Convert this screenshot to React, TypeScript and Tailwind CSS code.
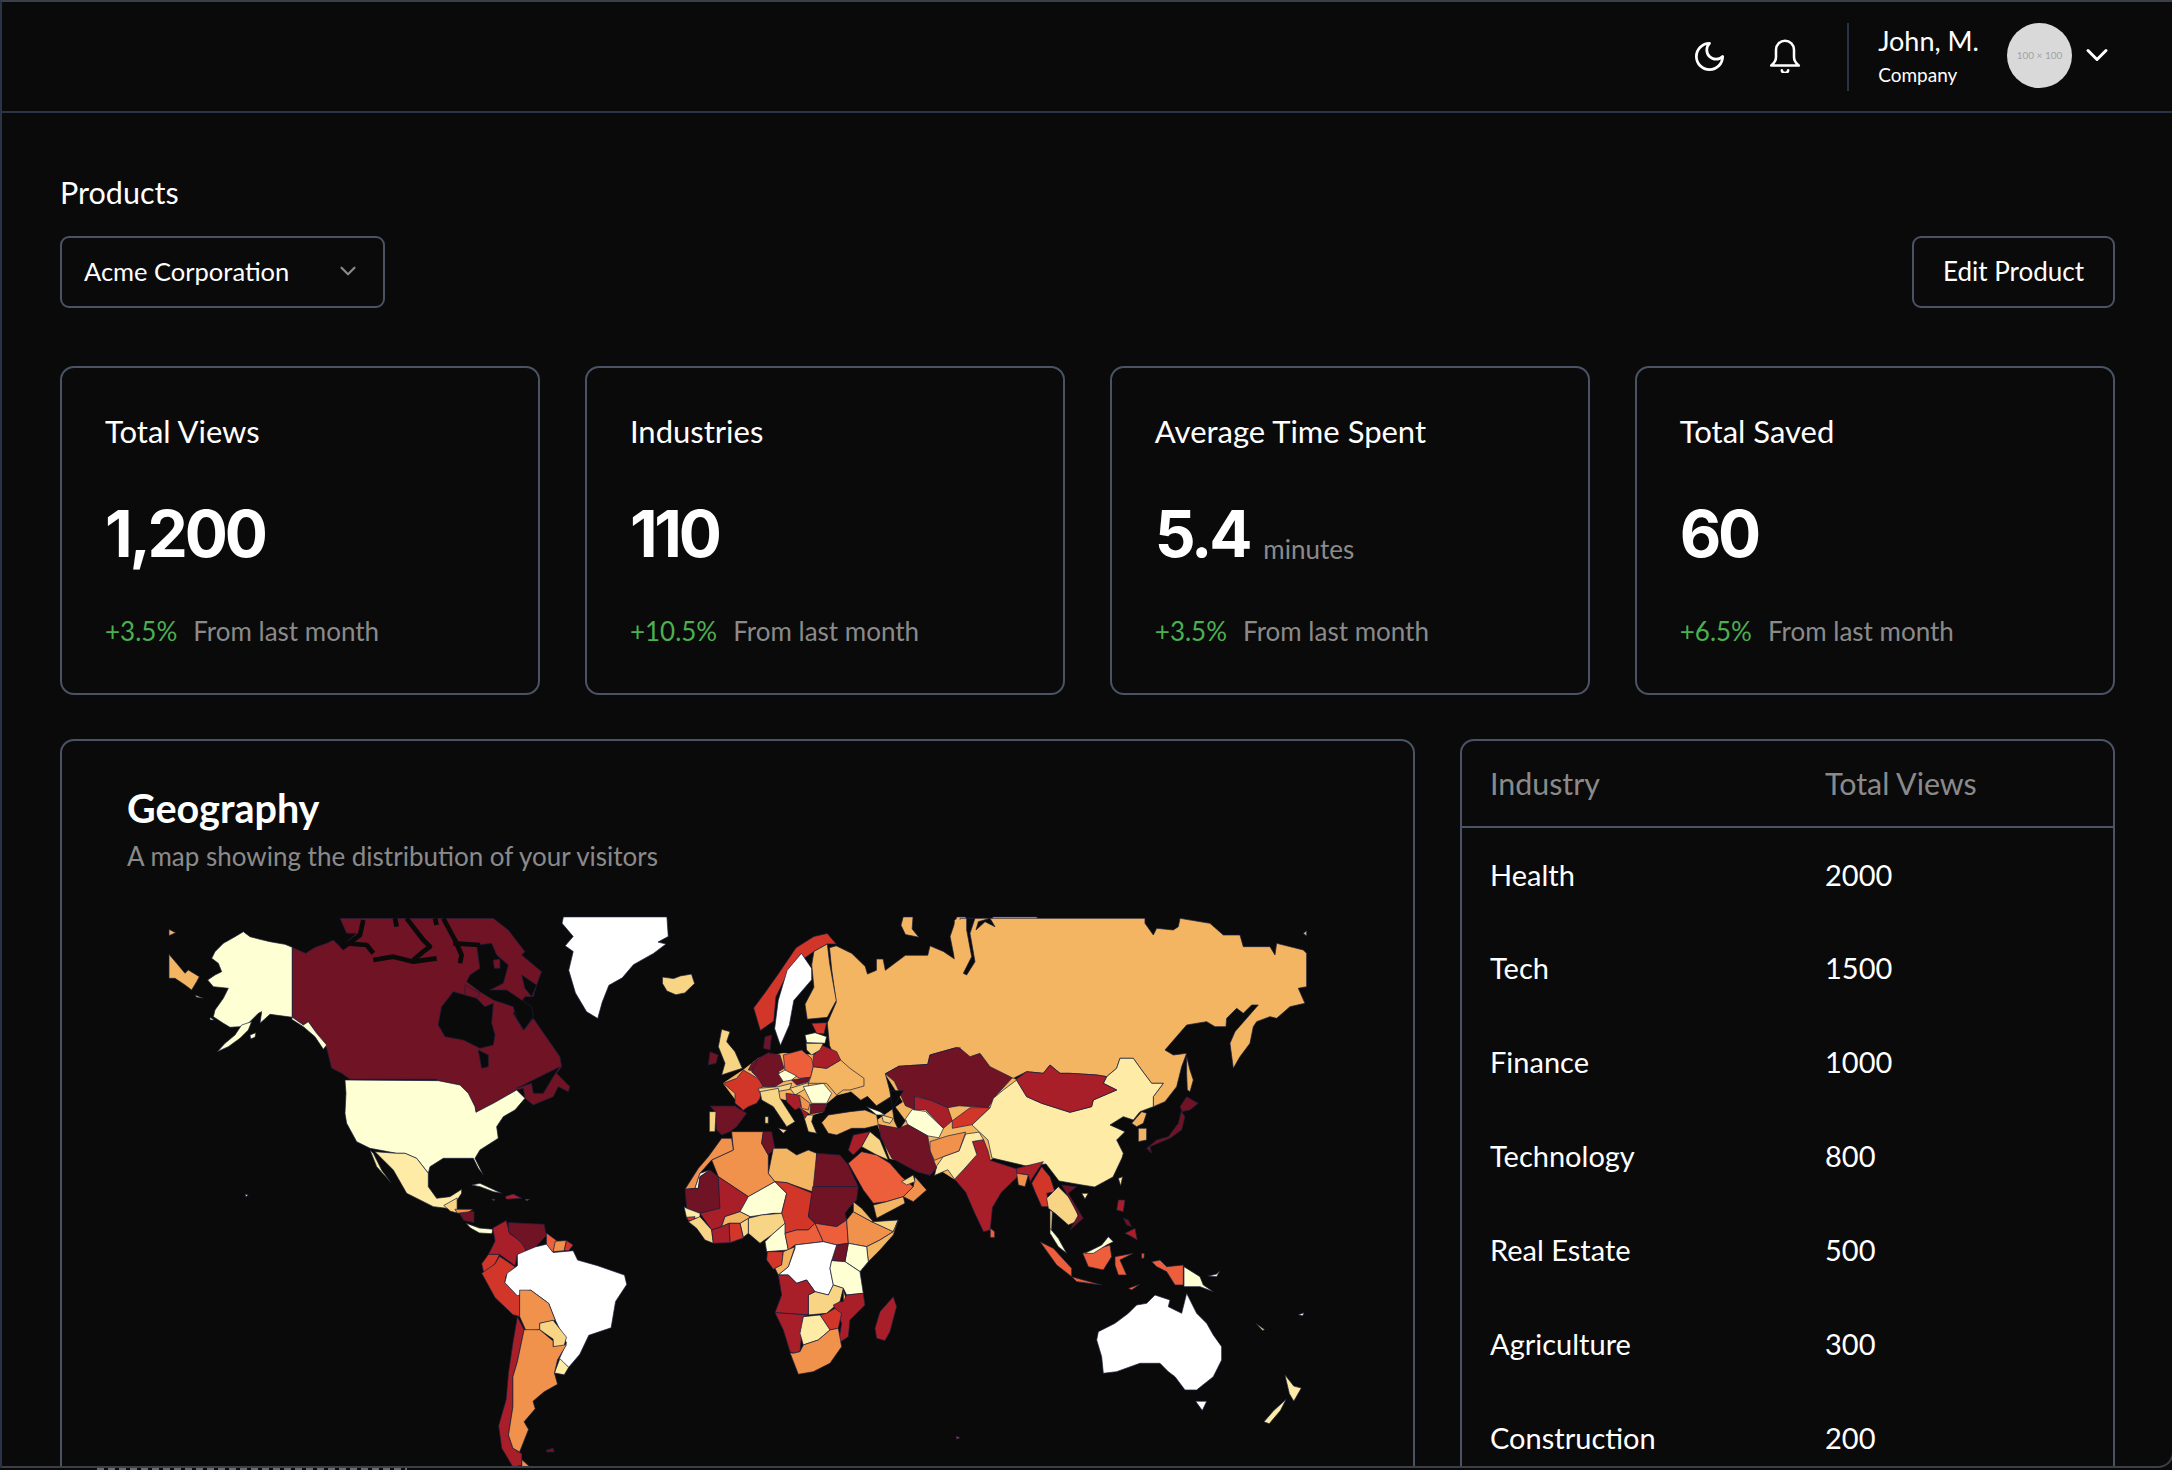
import React from 'react';
import { ChevronDown } from 'lucide-react';

const C = {
  maroon: '#6f1325',
  red: '#a81f2a',
  scarlet: '#d23629',
  coral: '#ec5f3a',
  orange: '#f0914c',
  amber: '#f3b562',
  sand: '#f8d585',
  cream: '#fdeba6',
  ivory: '#ffffd4',
  white: '#ffffff',
  sea: '#0a0a0a',
};

// fill, points, optional stroke (for patches that should not show an edge)
type Shape = [string, string, string?];

// canada, usa, mexico, caribbean at 1/3
const northAmerica: Shape[] = [
  [C.amber, '27,133 50,160 75,190 85,180 118,200 110,215 95,240 75,225 45,205 27,205'],
  [C.amber, '27,58 47,68 27,77'],
  [C.ivory, '105,255 130,265 110,262'],
  [C.ivory, '150,322 163,330 150,330'],
  [C.ivory, '397,112 375,103 330,95 300,88 270,80 250,65 225,80 190,100 165,125 155,145 175,160 185,185 165,195 143,210 160,230 205,235 190,265 165,300 160,320 190,340 210,352 240,350 260,345 275,330 295,310 305,305 300,340 330,313 397,322'],
  [C.ivory, '275,335 265,360 240,385 205,410 172,425 195,400 225,375 245,345'],
  [C.ivory, '270,375 288,368 285,382 272,387'],
  [C.maroon, '397,112 437,130 465,112 500,100 520,90 545,115 560,95 590,70 560,70 540,25 1000,25 1045,60 1095,125 1085,135 1145,185 1130,225 1120,260 1095,260 1060,310 1090,360 1120,325 1200,440 1205,470 1190,490 1230,530 1225,545 1195,530 1180,560 1120,585 1095,565 1090,535 1070,540 1000,580 950,607 945,590 925,550 900,525 835,512 830,508 570,508 545,490 515,475 500,415 470,370 445,335 430,345 397,322'],
  [C.ivory, '397,322 430,345 445,335 470,370 500,405 490,418 465,380 430,350 395,328'],
  [C.sea, '880,245 915,255 945,260 975,290 1000,280 995,340 1005,375 1000,405 960,415 910,390 855,380 835,345 845,290'],
  [C.sea, '955,420 985,435 985,470 965,475'],
  [C.sea, '950,105 995,100 1010,135 1045,165 1030,220 990,240 1040,240 1115,290 1120,320 1092,360 1070,325 1060,290 1000,270 960,245 920,215 930,195 960,175'],
  [C.maroon, '1000,150 1020,148 1020,175 1003,175'],
  [C.maroon, '915,225 960,250 950,265 915,255'],
  [C.sea, '1085,195 1130,225 1115,260 1095,235'],
  [C.sea, '1200,470 1130,505 1070,535 1115,520 1120,550 1150,550 1180,500'],
  [C.ivory, '555,510 835,512 900,525 925,550 945,590 948,607 980,590 1000,580 1070,540 1095,565 1065,600 1030,620 1010,650 1015,685 960,720 945,745 970,795 955,775 940,745 885,745 850,745 810,770 805,790 770,745 735,730 710,730 630,715 590,695 560,640 555,610 558,550'],
  [C.cream, '645,725 710,730 735,730 770,745 805,790 805,830 830,865 870,860 905,838 905,850 885,880 860,895 820,890 740,850 700,780 660,740'],
  [C.cream, '630,720 650,770 693,818 665,780 640,730'],
  [C.ivory, '935,825 960,820 1025,850 1000,845 960,830'],
  [C.red, '1035,860 1060,852 1085,865 1040,868'],
  [C.orange, '995,868 1005,868 1002,872'],
  [C.orange, '1095,868 1110,868 1100,872'],
  [C.white, '255,853 265,855 258,860'],
];

// greenland, central + south america, traced at 0.4464 x 0.3763
const southAmerica: Shape[] = [
  [C.white, '1038,98 1270,98 1273,150 1250,165 1268,170 1240,195 1195,225 1170,260 1140,280 1125,325 1115,368 1090,350 1065,300 1050,240 1060,190 1042,175 1060,150 1035,115'],
  [C.sand, '1260,258 1285,262 1300,255 1325,250 1332,275 1310,300 1290,305 1270,295 1260,275'],
  [C.sand, '770,865 800,845 800,885 785,880'],
  [C.orange, '795,875 835,875 820,888 800,885'],
  [C.maroon, '805,885 838,880 838,910 815,905'],
  [C.ivory, '820,912 850,925 880,928 878,940 850,938 830,925'],
  [C.red, '910,905 918,940 950,965 955,990 935,995 930,1025 895,995 870,995 885,960 880,925'],
  [C.maroon, '915,910 995,915 1000,945 960,995 945,965 915,935'],
  [C.coral, '1000,938 1025,960 1015,990 1000,970'],
  [C.orange, '1020,960 1045,958 1040,985 1015,988'],
  [C.scarlet, '1045,958 1060,970 1050,985 1040,985'],
  [C.scarlet, '870,995 895,995 885,1020 860,1045 855,1020'],
  [C.scarlet, '895,1000 930,1028 910,1050 907,1070 940,1105 940,1160 925,1155 885,1110 855,1045 885,1020'],
  [C.white, '945,990 975,975 1000,968 1015,990 1060,985 1070,1010 1115,1025 1175,1050 1180,1075 1155,1120 1145,1190 1095,1210 1075,1260 1050,1295 1028,1275 1045,1230 1020,1170 1005,1125 965,1090 935,1105 907,1070 912,1045 935,1025 935,995'],
  [C.orange, '940,1090 965,1090 1005,1125 1020,1170 985,1178 985,1195 955,1200 940,1160'],
  [C.sand, '985,1178 1015,1170 1045,1215 1038,1245 1015,1240 1015,1220 985,1195'],
  [C.cream, '1030,1272 1050,1295 1040,1315 1018,1310'],
  [C.red, '935,1160 950,1195 935,1280 925,1320 925,1400 915,1475 925,1510 945,1525 945,1555 925,1560 900,1510 893,1450 910,1380 915,1310 925,1230'],
  [C.orange, '950,1195 985,1195 1015,1225 1015,1240 1045,1235 1025,1275 1018,1310 1025,1340 995,1360 970,1385 975,1405 950,1440 960,1460 940,1520 925,1510 915,1475 925,1400 925,1320 935,1280'],
  [C.orange, '945,1540 965,1562 945,1562'],
  [C.maroon, '1000,1515 1015,1510 1018,1520 1000,1520'],
];

// west russia, scandinavia, central asia, india, islands, same scale
const asia: Shape[] = [
  [C.amber, '460,515 745,525 800,570 700,740 615,795 575,765 470,740 440,640 500,590', C.amber],
  [C.amber, '700,98 800,98 800,490 750,525 710,500 670,460 620,445 560,465 555,490 490,495 460,515 470,560 480,570 460,585 440,600 420,575 405,585 380,560 365,490 350,480 335,440 330,380 350,325 340,240 335,180 350,175 385,195 415,230 420,250 440,240 440,210 455,210 460,240 505,200 555,200 560,175 590,190 615,210 605,150 620,98 640,98 645,130 660,130 650,175 660,200 640,255 660,215 665,130 680,100 705,125'],
  [C.amber, '500,98 522,98 520,130 535,152 505,145 495,120'],
  [C.scarlet, '300,150 330,142 350,170 330,170 300,190 270,215 240,250 215,310 210,375 180,400 165,340 190,300 220,250 260,180'],
  [C.white, '272,195 295,235 295,265 255,320 245,385 225,440 212,395 220,320 240,240'],
  [C.amber, '330,170 335,220 350,320 330,365 285,370 280,330 300,285 295,225 300,190'],
  [C.maroon, '745,525 710,570 690,605 625,600 600,605 560,585 530,575 525,610 505,600 490,560 480,535 460,515 490,495 555,490 560,465 620,445 670,460 710,500'],
  [C.sea, '470,560 500,560 480,600 505,640 490,665 480,640'],
  [C.red, '655,695 680,690 690,720 695,745 760,770 755,790 720,830 700,870 695,930 680,935 660,885 640,830 615,795 635,770 665,730'],
  [C.coral, '695,925 705,935 705,950 695,950'],
  [C.cream, '640,675 670,670 680,690 655,695 665,730 635,770 615,795 600,770 570,785 575,760 590,735 625,720'],
  [C.orange, '560,695 600,680 640,670 625,720 590,735 570,745 560,720'],
  [C.ivory, '505,635 520,610 550,615 590,660 580,685 555,680 510,650'],
  [C.red, '525,575 560,585 600,605 610,640 590,660 550,610 525,610'],
  [C.scarlet, '610,640 650,605 695,605 655,650 610,660'],
  [C.maroon, '445,650 490,660 510,650 555,680 560,720 575,765 560,785 530,775 475,740 450,685'],
  [C.white, '1155,1385 1180,1385 1170,1410'],
  [C.cream, '1355,1315 1375,1345 1392,1350 1375,1385 1365,1365'],
  [C.cream, '1358,1380 1345,1410 1320,1445 1308,1440 1330,1410'],
  [C.sand, '1290,1178 1310,1195 1305,1197'],
  [C.white, '1385,1155 1398,1150 1395,1158'],
  [C.scarlet, '618,1478 628,1482 620,1486'],
];

// siberia, china, mongolia, japan at 1/3
const eastAsia: Shape[] = [
  [C.amber, '0,25 555,25 555,40 580,75 590,55 640,60 655,50 660,25 750,40 790,75 840,75 850,110 930,110 945,135 950,100 1030,120 1040,130 1040,230 1015,235 1035,280 990,290 950,325 930,320 890,335 880,350 870,400 840,440 820,475 810,400 825,365 895,285 875,285 850,310 830,295 800,325 798,350 765,350 740,335 680,345 615,420 640,435 680,430 665,470 650,530 615,575 580,590 580,560 610,520 575,520 545,480 520,445 480,445 470,475 440,500 410,495 330,490 300,490 270,465 250,490 200,485 160,505 90,470 60,430 30,440 0,415'],
  // hides the seam where this layer meets west russia
  [C.amber, '-15,30 15,30 15,410 -15,410', C.amber],
  [C.sea, '20,25 45,25 30,70 45,155 20,195 10,190 35,140 20,60'],
  [C.sea, '48,60 55,35 90,25 105,50 75,35'],
  [C.amber, '680,440 690,480 700,510 690,545 682,540 680,490'],
  [C.amber, '1030,70 1040,62 1040,78'],
  [C.cream, '170,510 200,560 245,580 330,607 395,590 400,570 470,540 430,520 440,500 470,475 480,445 520,445 545,480 575,520 610,520 580,560 580,590 540,605 520,630 490,620 450,645 495,665 470,690 490,730 486,744 459,801 404,831 366,825 297,813 258,762 198,768 96,744 84,690 36,645 90,594 100,565 130,540'],
  [C.red, '168,508 200,485 250,490 270,465 300,490 330,490 410,495 440,500 430,520 470,540 400,570 395,590 330,607 245,580 200,560'],
  [C.amber, '515,640 545,605 560,610 550,640 530,650'],
  [C.amber, '535,655 560,655 560,690 535,695'],
  [C.maroon, '680,560 715,580 690,600 665,605 675,620 665,660 630,685 570,710 575,730 560,715 590,690 625,680 655,640 665,600 660,590'],
];

// europe, middle east at 1/3
const mediterranean: Shape[] = [
  [C.amber, '235,175 310,160 400,165 470,155 552,240 510,275 470,285 440,310 430,335 395,345 370,330 320,300 240,280 190,330 130,250 190,210', C.amber],
  [C.sand, '125,88 150,95 140,125 165,155 187,205 155,215 125,225 135,190 125,165 115,140'],
  [C.maroon, '90,155 115,165 108,190 85,195'],
  [C.maroon, '205,210 215,190 235,175 240,215'],
  [C.scarlet, '130,250 170,235 190,210 250,245 240,295 230,310 205,320 190,330 165,310 165,280'],
  [C.maroon, '90,318 165,318 200,340 170,380 150,395 125,405 110,390 105,335'],
  [C.sand, '88,335 108,335 105,395 88,395'],
  [C.maroon, '235,175 265,158 300,165 312,205 295,215 318,240 285,260 250,260 235,235 215,215'],
  [C.maroon, '255,110 275,105 270,150 250,145'],
  [C.coral, '310,165 365,150 395,175 400,200 392,232 360,235 315,212'],
  [C.ivory, '295,222 315,210 350,228 335,240 310,245'],
  [C.sand, '235,265 295,260 335,250 330,268 290,275 240,280'],
  [C.sand, '330,265 385,248 385,262 345,285'],
  [C.maroon, '335,240 390,232 385,245 350,255'],
  [C.ivory, '370,260 430,250 455,280 440,310 395,310'],
  [C.amber, '392,232 400,200 440,205 482,180 510,205 552,235 552,258 510,270 490,270 470,285 440,250 385,250'],
  [C.red, '400,168 425,135 470,155 482,180 440,205 400,200'],
  [C.scarlet, '395,70 440,68 432,102 410,100'],
  [C.ivory, '375,105 405,98 440,110 435,130 380,128'],
  [C.sand, '378,130 430,130 420,150 395,165 380,150'],
  [C.sand, '240,275 295,265 300,295 345,365 320,380 280,320 245,300'],
  [C.sand, '295,385 320,390 310,400'],
  [C.sand, '255,350 265,350 265,370 255,370'],
  [C.red, '318,280 355,285 365,320 345,330 320,305'],
  [C.orange, '358,285 390,310 385,330 365,325'],
  [C.maroon, '392,312 440,312 432,335 390,342'],
  [C.sand, '370,345 400,345 395,365 410,400 385,395'],
  [C.red, '360,325 385,340 375,355'],
  [C.amber, '425,368 445,345 510,335 555,330 590,345 595,375 555,385 515,385 470,405 445,400'],
  [C.ivory, '560,320 600,335 615,345 590,345'],
  [C.sand, '605,345 640,355 630,370 610,365'],
  [C.red, '520,405 570,395 545,440 520,465 505,450'],
  [C.sand, '570,395 600,420 625,480 590,465 545,440'],
  [C.coral, '505,490 545,455 590,465 630,490 665,530 700,560 670,590 620,605 580,610 550,570'],
  [C.orange, '705,530 740,570 700,605 670,590 700,560'],
  [C.sand, '665,545 700,525 705,545 680,555'],
  [C.amber, '580,615 620,605 670,590 675,610 590,655'],
];

// all of africa at 1/3, neighbours share their vertices
const africa: Shape[] = [
  [C.orange, '95,480 160,450 155,395 250,395 245,430 265,465 265,520 285,545 205,590 115,530'],
  [C.maroon, '250,395 275,395 285,445 265,465 245,430'],
  [C.orange, '160,450 155,415 125,415 85,470 55,505 15,568 45,565 60,520 95,480'],
  [C.ivory, '45,565 60,520 90,510 60,530 55,565'],
  [C.maroon, '15,568 55,565 60,530 90,510 115,530 120,625 60,640 20,625'],
  [C.amber, '265,520 280,445 320,445 350,465 385,450 410,460 410,580 320,548 285,545'],
  [C.maroon, '410,460 480,465 505,495 535,560 400,560'],
  [C.red, '115,530 205,590 215,600 180,635 135,650 125,680 95,690 60,640 120,625'],
  [C.ivory, '205,590 285,545 320,580 305,640 280,640 210,650 180,635'],
  [C.scarlet, '285,545 320,548 398,580 385,650 405,670 385,690 350,690 315,700 305,640 320,580'],
  [C.maroon, '398,560 535,560 530,600 510,620 495,640 500,660 470,680 405,670 385,650'],
  [C.cream, '12,620 20,625 60,640 60,655 20,655'],
  [C.scarlet, '20,652 45,650 40,662 25,662'],
  [C.sand, '25,665 60,650 95,690 100,730 75,720 50,685'],
  [C.sand, '205,655 245,645 305,640 315,670 275,705 240,730 205,700'],
  [C.sand, '180,670 205,655 205,700 190,712'],
  [C.amber, '125,680 135,650 180,635 210,650 205,655 180,670 147,670'],
  [C.scarlet, '147,670 180,670 190,714 150,728'],
  [C.red, '95,690 125,680 147,670 150,728 100,730'],
  [C.ivory, '275,705 315,670 315,700 325,750 260,755 255,725'],
  [C.coral, '315,700 350,690 385,690 405,670 430,725 345,735 325,750'],
  [C.coral, '405,670 470,680 500,660 505,730 470,735 430,725'],
  [C.orange, '500,660 520,635 575,665 640,695 600,720 560,740 505,730'],
  [C.amber, '520,605 545,625 580,665 575,665 520,635'],
  [C.sand, '580,665 655,660 640,695 575,665'],
  [C.amber, '655,660 640,705 600,750 565,785 560,740 600,720 640,695'],
  [C.ivory, '505,730 560,740 565,785 540,815 495,785'],
  [C.maroon, '470,735 505,730 495,785 455,782'],
  [C.white, '345,735 430,725 470,735 455,782 450,805 460,855 445,885 405,875 380,840 350,850 325,825 295,825 325,800 345,745'],
  [C.scarlet, '262,755 310,755 305,795 280,808 260,780'],
  [C.amber, '310,755 345,740 325,800 295,825 285,805 305,795'],
  [C.ivory, '455,782 495,785 540,815 550,880 500,885 490,865 460,855 450,805'],
  [C.sand, '385,885 405,875 445,885 460,855 490,865 480,905 440,940 385,945'],
  [C.amber, '490,870 510,930 495,915 490,905'],
  [C.red, '500,885 550,880 555,915 510,960 505,1010 475,1030 485,970 460,915 480,905 490,905'],
  [C.scarlet, '420,945 440,940 465,925 485,940 475,985 450,990'],
  [C.red, '295,825 325,825 350,850 380,840 405,875 385,885 385,945 285,938 305,885'],
  [C.red, '285,938 385,945 370,950 360,1055 340,1060 330,1055 310,990'],
  [C.cream, '370,950 420,945 450,990 415,1020 370,1035 360,1000'],
  [C.orange, '360,1055 370,1035 415,1020 450,990 475,985 485,1040 450,1090 400,1115 355,1123 330,1058 340,1060'],
  [C.red, '640,890 650,920 630,995 615,1022 590,1015 585,985 600,935'],
];

// south-east asia + australia at 1/3
const pacific: Shape[] = [
  [C.red, '50,55 130,35 90,95 85,75 50,70'],
  [C.orange, '50,70 85,75 75,110 55,105'],
  [C.scarlet, '95,100 125,50 150,80 165,125 140,130 150,170 125,170 105,125'],
  [C.sand, '140,145 175,110 215,150 240,210 205,225 165,190 145,175'],
  [C.maroon, '185,105 230,110 205,130 250,205 210,240 235,195 205,140'],
  [C.sand, '150,180 157,185 155,240 150,235'],
  [C.ivory, '150,235 175,265 200,310 175,290 150,250'],
  [C.coral, '120,275 160,295 215,355 215,380 170,345'],
  [C.coral, '215,380 305,405 230,395'],
  [C.coral, '248,310 330,285 335,320 310,360 265,350'],
  [C.ivory, '255,310 305,285 325,260 340,275 320,285 280,310'],
  [C.coral, '345,320 400,310 360,330 380,375 355,375 345,345'],
  [C.coral, '455,335 480,330 500,350 550,345 550,405 525,405 500,365 470,350'],
  [C.ivory, '552,350 600,380 610,405 640,425 600,410 570,410 552,410'],
  [C.ivory, '625,378 650,372 660,362 650,380'],
  [C.red, '355,150 375,150 370,185 350,180'],
  [C.red, '375,250 405,235 412,270 395,260'],
  [C.maroon, '370,205 385,210 395,230 380,225'],
  [C.coral, '385,415 420,403 395,420'],
  [C.coral, '425,310 433,310 432,325 425,325'],
  [C.cream, '355,85 368,80 362,108'],
  [C.cream, '245,130 265,130 255,147'],
  [C.white, '295,545 345,520 385,490 410,465 440,460 465,435 510,450 505,470 545,490 560,430 590,490 620,520 640,555 665,590 665,630 640,680 590,720 555,720 525,680 505,665 480,640 420,640 350,665 310,670 305,620 290,570'],
];

// thin water channels between the arctic islands, 1/3 scale
const arcticChannels = [
  '545,115 600,75 610,30',
  '560,100 620,105 640,130',
  '640,150 700,140 760,155 830,145',
  '705,25 710,50',
  '740,25 790,90 810,110 790,125 760,150',
  '825,25 830,45',
  '850,25 885,90 905,135 900,160',
  '880,100 960,105',
];

const Layer = ({ shapes, transform }: { shapes: Shape[]; transform: string }) => (
  <g transform={transform}>
    {shapes.map(([fill, points, stroke], i) => (
      <polygon key={i} fill={fill} points={points} stroke={stroke ?? '#1a1f3d'} strokeWidth={0.7} strokeLinejoin="round" vectorEffect="non-scaling-stroke" />
    ))}
  </g>
);

const WorldMap = () => (
  <svg viewBox="160 900 1180 570" className="block ml-[33px] mt-[26px] w-[1180px] h-[570px] shrink-0">
    <Layer shapes={northAmerica} transform="translate(160 910) scale(0.3333)" />
    <g transform="translate(160 910) scale(0.3333)">
      {arcticChannels.map(p => (
        <polyline key={p} points={p} fill="none" stroke={C.sea} strokeWidth={14} strokeLinejoin="round" />
      ))}
    </g>
    <Layer shapes={southAmerica} transform="translate(100 880) scale(0.4464 0.3763)" />
    <Layer shapes={asia} transform="translate(680 880) scale(0.4464 0.3763)" />
    <Layer shapes={eastAsia} transform="translate(960 910) scale(0.3333)" />
    <Layer shapes={mediterranean} transform="translate(680 1000) scale(0.3333)" />
    <Layer shapes={africa} transform="translate(680 1000) scale(0.3333)" />
    <Layer shapes={pacific} transform="translate(1000 1150) scale(0.3333)" />
  </svg>
);

const stats = [
  { label: 'Total Views', value: '1,200', delta: '+3.5%' },
  { label: 'Industries', value: '110', delta: '+10.5%' },
  { label: 'Average Time Spent', value: '5.4', unit: 'minutes', delta: '+3.5%' },
  { label: 'Total Saved', value: '60', delta: '+6.5%' },
];

const rows = [
  ['Health', '2000'],
  ['Tech', '1500'],
  ['Finance', '1000'],
  ['Technology', '800'],
  ['Real Estate', '500'],
  ['Agriculture', '300'],
  ['Construction', '200'],
];

const App: React.FC = () => {
  return (
    <div className="h-[1470px] w-full overflow-hidden bg-[#0a0a0a] font-['Lato',sans-serif] text-white">
      <div className="h-[1468px] w-[2174px] overflow-hidden rounded-br-[16px] border-2 border-[#3b4048] border-l-[#2a3447]">
        <header className="flex h-[111px] items-center justify-end border-b-2 border-[#2a3447] pr-[57px]">
          <svg viewBox="0 0 24 24" className="w-[35px] h-[35px] mr-[42px] -mt-[1px]" fill="none" stroke="currentColor" strokeWidth={1.9} strokeLinecap="round" strokeLinejoin="round">
            <path d="M12 3a6 6 0 0 0 9 9 9 9 0 1 1-9-9Z" />
          </svg>
          <svg viewBox="0 0 30 34" className="w-[32px] h-[36px] mr-[46px] -mt-[3px]" fill="none" stroke="currentColor" strokeWidth={2.4} strokeLinecap="round" strokeLinejoin="round">
            <path d="M2 27c2.500-2 4.500-4 4.500-8v-7a8.500 8.500 0 0 1 17 0v7c0 4 2 6 4.500 8z" />
            <path d="M12 31.500a3 2.500 0 0 0 6 0" />
          </svg>
          <div className="h-[68px] w-[2px] bg-[#2a3447]" />
          <div className="ml-[29px] flex -mt-[2px] flex-col">
            <span className="text-[27px] leading-[36px]">John, M.</span>
            <span className="mt-[2px] text-[19px] leading-[28px]">Company</span>
          </div>
          <div className="ml-[28px] -mt-[3px] flex h-[65px] w-[65px] items-center justify-center rounded-full bg-[#d9d9d9] text-[10px] text-[#a3a3a3]">
            100 × 100
          </div>
          <ChevronDown size={36} strokeWidth={2} className="ml-[7px] -mt-[3px]" />
        </header>

        <main className="pl-[58px] pr-[57px] pt-[59px]">
          <h1 className="text-[30.500px] leading-[40px] font-normal">Products</h1>

          <div className="mt-[24px] flex items-center justify-between">
            <div className="flex h-[72px] w-[325px] items-center justify-between rounded-[9px] border-2 border-[#4a5364] pb-[2px] pl-[22px] pr-[22px] text-[25.500px]">
              Acme Corporation
              <ChevronDown size={26} strokeWidth={2} className="text-[#8a8a8a]" />
            </div>
            <button className="h-[72px] w-[203px] rounded-[9px] border-2 border-[#4a5364] pb-[2px] text-[26px]">Edit Product</button>
          </div>

          <section className="mt-[58px] grid grid-cols-4 gap-[44.670px]">
            {stats.map(s => (
              <div key={s.label} className="flex h-[329px] flex-col rounded-[14px] border-2 border-[#4a5364] pl-[43px] pt-[43px]">
                <div className="text-[31px] leading-[40px]">{s.label}</div>
                <div className="mt-[43px] flex h-[80px] items-baseline leading-[80px]">
                  <span className="font-['Inter',sans-serif] text-[64px] font-bold tracking-[-0.05em]">{s.value}</span>
                  {s.unit && <span className="ml-[14px] translate-y-[2px] text-[26px] text-[#8a8a8a]">{s.unit}</span>}
                </div>
                <div className="mt-[39px] flex gap-[16px] text-[26px] leading-[36px]">
                  <span className="text-[#4caf50]">{s.delta}</span>
                  <span className="text-[#8a8a8a]">From last month</span>
                </div>
              </div>
            ))}
          </section>

          <section className="mt-[44px] grid grid-cols-[1355px_655px] gap-[45px]">
            <div className="flex h-[900px] flex-col rounded-[14px] border-2 border-[#4a5364] pl-[65px] pt-[43px]">
              <h2 className="text-[39.500px] leading-[48px] font-bold">Geography</h2>
              <p className="mt-[6px] text-[26px] leading-[36px] text-[#8a8a8a]">A map showing the distribution of your visitors</p>
              <WorldMap />
            </div>

            <div className="h-[900px] rounded-[14px] border-2 border-[#4a5364]">
              <table className="w-full table-fixed text-left text-[29px]">
                <thead>
                  <tr className="h-[86px] border-b-2 border-[#4a5364] text-[#8a8a8a]">
                    <th className="w-[363px] pl-[28px] font-normal text-[30.400px]">Industry</th>
                    <th className="font-normal text-[30.400px]">Total Views</th>
                  </tr>
                </thead>
                <tbody>
                  {rows.map(([name, views]) => (
                    <tr key={name} className="h-[94px]">
                      <td className="pl-[28px]">{name}</td>
                      <td>{views}</td>
                    </tr>
                  ))}
                </tbody>
              </table>
            </div>
          </section>
        </main>
      </div>
      {/* tops of a cut off line of text under the frame */}
      <div className="ml-[97px] h-[2px] w-[310px] bg-[repeating-linear-gradient(90deg,#6b6b6b_0_7px,transparent_7px_11px)]" />
    </div>
  );
};

export default App;
